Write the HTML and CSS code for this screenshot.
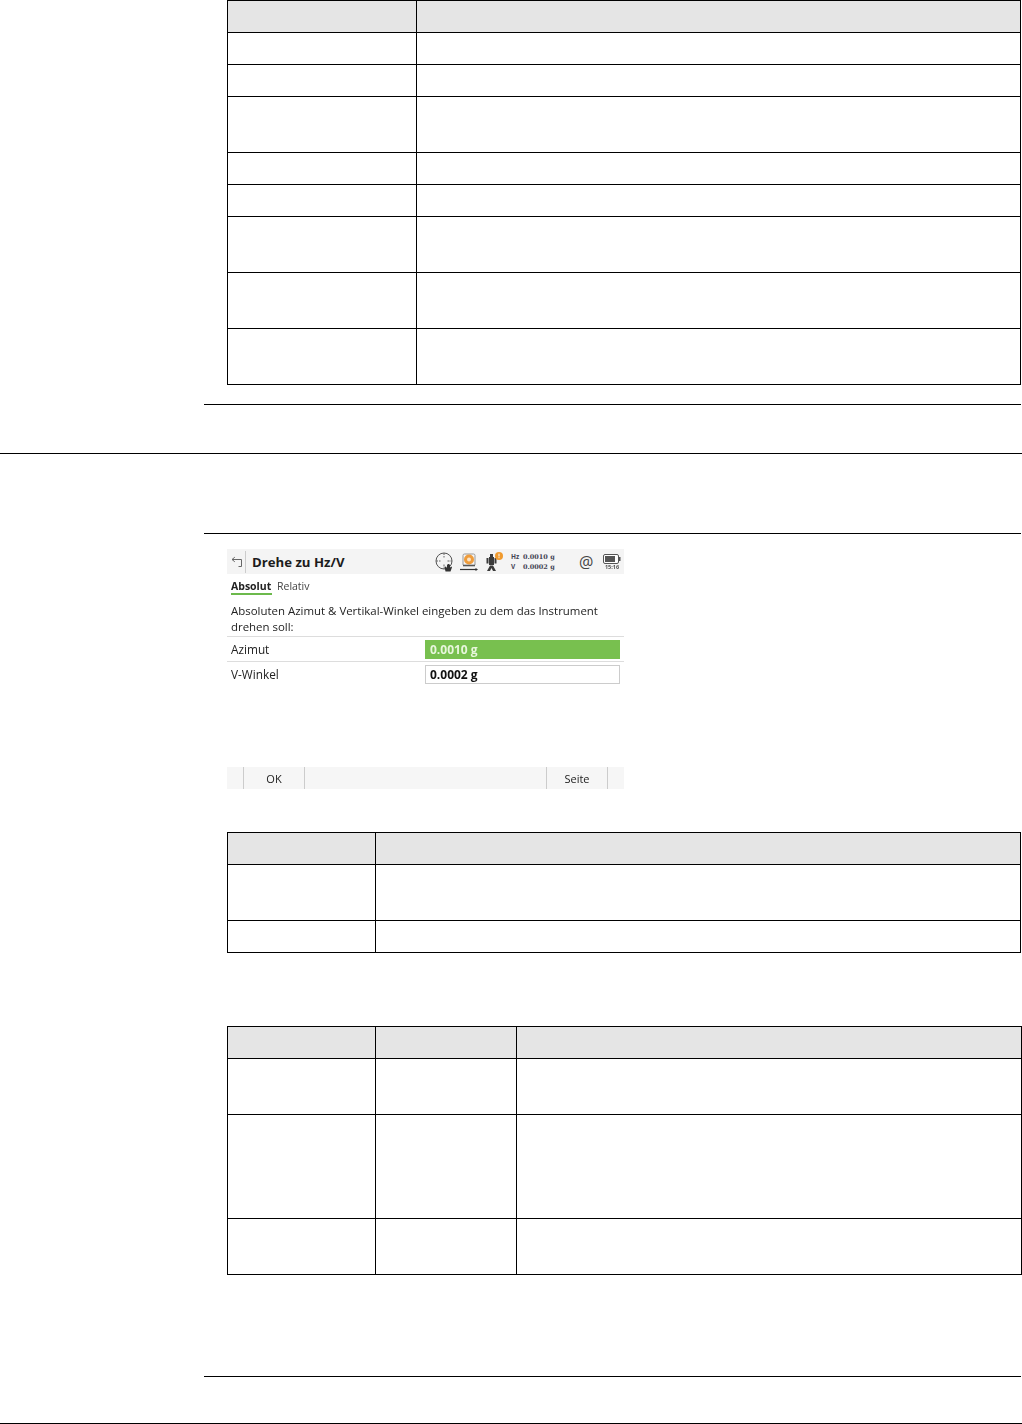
FILE: index.html
```html
<!DOCTYPE html>
<html lang="de">
<head>
<meta charset="utf-8">
<title>Drehe zu Hz/V</title>
<link rel="stylesheet" href="styles.css">
</head>
<body>
<div class="section">
  <table class="grid t-a">
    <tr class="head"><td></td><td></td></tr>
    <tr class="r1"><td></td><td></td></tr>
    <tr class="r1"><td></td><td></td></tr>
    <tr class="r2"><td></td><td></td></tr>
    <tr class="r1"><td></td><td></td></tr>
    <tr class="r1"><td></td><td></td></tr>
    <tr class="r2"><td></td><td></td></tr>
    <tr class="r2"><td></td><td></td></tr>
    <tr class="r2"><td></td><td></td></tr>
  </table>
  <div class="rule rule-a"></div>
</div>
<div class="full-rule rule-b"></div>
<div class="section">
  <div class="rule rule-c"></div>
  <div class="screen">
    <div class="titlebar">
      <svg class="back" width="12" height="12" viewBox="0 0 12 12"><path d="M1 3.5H10.5V10.5H7.5M1 3.5L3.8 1.2M1 3.5L3.8 5.8" fill="none" stroke="#666" stroke-width="1"/></svg>
      <span class="title">Drehe zu Hz/V</span>
      <svg class="ic ic-target" width="19" height="20" viewBox="0 0 19 20"><circle cx="9" cy="9" r="8" fill="none" stroke="#555"/><path d="M9 1V5.5M9 12.5V17M1 9H5.5M12.5 9H17" stroke="#666" stroke-dasharray="2 1"/><path d="M10.5 19.5L9.5 15L11 14.5L12 16V12.5H13V15V12H14V15V12.5H15V15.5L16.5 14.5L17 15.2L15.5 19.5Z" fill="#333"/></svg>
      <svg class="ic ic-prism" width="18" height="20" viewBox="0 0 18 20"><path d="M3 13V3.5Q3 2 4.5 2H13.5Q15 2 15 3.5V13" fill="none" stroke="#999"/><circle cx="9" cy="7.5" r="5" fill="#ee9c3c"/><circle cx="9" cy="7.5" r="2" fill="#fbe4c4"/><path d="M3 13.5H15" stroke="#555" stroke-width="1.6"/><path d="M0 17.5H17" stroke="#333" stroke-width="1.2"/><path d="M15.5 16L18 17.5L15.5 19Z" fill="#333"/></svg>
      <svg class="ic ic-total" width="19" height="20" viewBox="0 0 19 20"><path d="M5 5H6V2H9V5H10V13H5ZM2.5 6H4.5V11.5H2.5ZM10.5 6H12.5V11.5H10.5ZM6 13.5H9L12 19H9L7.5 16L6 19H3Z" fill="#3b3b3b"/><circle cx="15" cy="4" r="4" fill="#f09a2e"/><path d="M15 1.7V4.5M15 5.2V6.2" stroke="#fff"/></svg>
      <div class="readout">
        <div class="readout-row"><span class="readout-key">Hz</span><span class="readout-val">0.0010 g</span></div>
        <div class="readout-row"><span class="readout-key">V</span><span class="readout-val">0.0002 g</span></div>
      </div>
      <span class="at">@</span>
      <div class="battery">
        <svg width="18" height="10" viewBox="0 0 18 10"><rect x=".5" y=".5" width="15" height="9" rx="1.5" fill="#fff" stroke="#555"/><rect x="2" y="2" width="10" height="6" fill="#555"/><path d="M16 3H17.5V7H16Z" fill="#555"/></svg>
        <span class="clock">15:16</span>
      </div>
    </div>
    <div class="tabs"><span class="tab-on">Absolut</span><span class="tab-off">Relativ</span></div>
    <p class="prompt">Absoluten Azimut &amp; Vertikal-Winkel eingeben zu dem das Instrument drehen soll:</p>
    <div class="field">
      <span class="label">Azimut</span>
      <span class="value value-on">0.0010 g</span>
    </div>
    <div class="field">
      <span class="label">V-Winkel</span>
      <span class="value">0.0002 g</span>
    </div>
    <div class="softkeys">
      <span class="key key-ok">OK</span>
      <span class="key key-page">Seite</span>
    </div>
  </div>
  <table class="grid t-b">
    <tr class="head"><td></td><td></td></tr>
    <tr class="r2"><td></td><td></td></tr>
    <tr class="r1"><td></td><td></td></tr>
  </table>
  <table class="grid t-c">
    <tr class="head"><td></td><td></td><td></td></tr>
    <tr class="r2"><td></td><td></td><td></td></tr>
    <tr class="r4"><td></td><td></td><td></td></tr>
    <tr class="r2"><td></td><td></td><td></td></tr>
  </table>
  <div class="rule rule-d"></div>
</div>
<div class="full-rule rule-e"></div>
</body>
</html>
```
FILE: styles.css
```css
* { box-sizing: border-box; }
html, body { margin: 0; padding: 0; background: #fff; }
body { width: 1022px; height: 1424px; overflow: hidden; font-family: "Open Sans", "Noto Sans", sans-serif; color: #222; }

.section { padding-left: 204px; }
.rule { height: 1px; width: 817px; background: #000; }
.full-rule { height: 1px; background: #000; }
.rule-a { margin-top: 19px; }
.rule-b { margin-top: 48px; }
.rule-c { margin-top: 79px; }
.rule-d { margin-top: 101px; }
.rule-e { margin-top: 46px; }

.grid { border-collapse: collapse; table-layout: fixed; margin-left: 23px; }
.grid td { border: 1px solid #000; padding: 0; }
.head td { background: #e5e5e5; height: 32px; }
.r1 td { height: 32px; }
.r2 td { height: 56px; }
.r4 td { height: 104px; }
.t-a { width: 794px; }
.t-a td:first-child { width: 189px; }
.t-b { width: 794px; margin-top: 43px; }
.t-b td:first-child { width: 148px; }
.t-c { width: 795px; margin-top: 73px; }
.t-c td:first-child { width: 148px; }
.t-c td:nth-child(2) { width: 141px; }

.screen { margin: 15px 0 0 23px; width: 397px; height: 240px; display: flex; flex-direction: column; filter: blur(.35px); }
.titlebar { height: 25px; background: #f4f4f4; display: flex; align-items: center; padding-left: 4px; flex: none; }
.back { flex: none; }
.title { margin-left: 2px; padding-left: 6px; border-left: 1px solid #ccc; font-size: 13.2px; line-height: 22px; font-weight: 700; color: #1c1c1c; width: 190px; flex: none; white-space: nowrap; }
.ic { flex: none; margin-right: 6px; }
.ic-total { margin-right: 8px; }
.readout { width: 68px; flex: none; font-family: "DejaVu Serif", serif; font-size: 6.5px; line-height: 10px; font-weight: 700; color: #445; }
.readout-row { display: flex; }
.readout-key { width: 12px; font-family: "Open Sans", sans-serif; }
.at { font-size: 16px; color: #444; width: 24px; flex: none; }
.battery { display: flex; flex-direction: column; align-items: center; width: 18px; flex: none; }
.clock { font-size: 5.5px; line-height: 6px; font-weight: 700; color: #555; }

.tabs { display: flex; gap: 5px; padding-left: 4px; height: 22px; font-size: 10.5px; align-items: flex-start; padding-top: 6px; flex: none; }
.tab-on { font-weight: 700; color: #222; border-bottom: 2px solid #6cb94c; line-height: 13px; height: 15px; width: 41px; white-space: nowrap; }
.tab-off { color: #444; line-height: 13px; }

.prompt { margin: 7px 0 0; padding: 0 4px; font-size: 11.45px; line-height: 15.5px; height: 33px; color: #222; flex: none; }
.field { height: 24.5px; border-top: 1px solid #ddd; display: flex; align-items: flex-end; padding: 0 0 1.5px 4px; flex: none; }
.label { width: 194px; font-size: 11.8px; line-height: 19px; color: #222; flex: none; }
.value { width: 195px; height: 19px; border: 1px solid #ccc; font-size: 12px; font-weight: 700; color: #111; line-height: 17px; padding-left: 4px; }
.value-on { background: #78c04f; border-color: #78c04f; color: #e8f6dd; }

.softkeys { margin-top: auto; height: 22px; background: #f6f6f6; display: flex; padding-left: 16px; font-size: 11px; color: #222; flex: none; }
.key { display: block; text-align: center; line-height: 24px; border-left: 1px solid #ccc; border-right: 1px solid #ccc; }
.key-ok { width: 62px; }
.key-page { width: 62px; margin-left: 241px; }
```
